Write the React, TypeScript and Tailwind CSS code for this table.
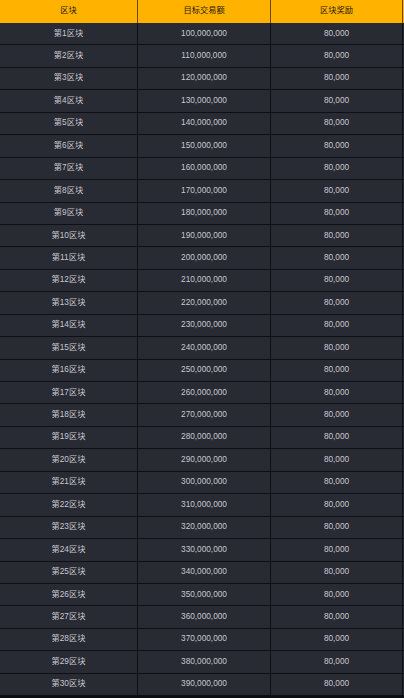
const rows = Array.from({ length: 30 }, (_, i) => ({
  name: `第${i + 1}区块`,
  target: (100000000 + i * 10000000).toLocaleString("en-US"),
  reward: "80,000",
}));

const font = "font-['Liberation_Sans','Noto_Sans_CJK_SC',sans-serif]";

export default function App() {
  return (
    <div className={`w-[404px] h-[698px] bg-[#0d0e12] ${font} text-[8.25px] leading-none`}>
      <div className="grid grid-cols-[138px_133px_132px] h-[23px] bg-[#ffb300] text-[#2b2000]">
        <div className="flex items-center justify-center border-r border-[#6b4a00]">区块</div>
        <div className="flex items-center justify-center border-r border-[#6b4a00]">目标交易额</div>
        <div className="flex items-center justify-center border-r border-[#6b4a00]">区块奖励</div>
      </div>
      {rows.map((r) => (
        <div
          key={r.name}
          className="grid grid-cols-[138px_133px_132px] h-[22.45px] bg-[#282a34] text-[#c8c9cd] border-b border-[#0f1014]"
        >
          <div className="flex items-center justify-center border-r border-[#0f1014]">{r.name}</div>
          <div className="flex items-center justify-center border-r border-[#0f1014]">{r.target}</div>
          <div className="flex items-center justify-center border-r border-[#0f1014]">{r.reward}</div>
        </div>
      ))}
    </div>
  );
}
